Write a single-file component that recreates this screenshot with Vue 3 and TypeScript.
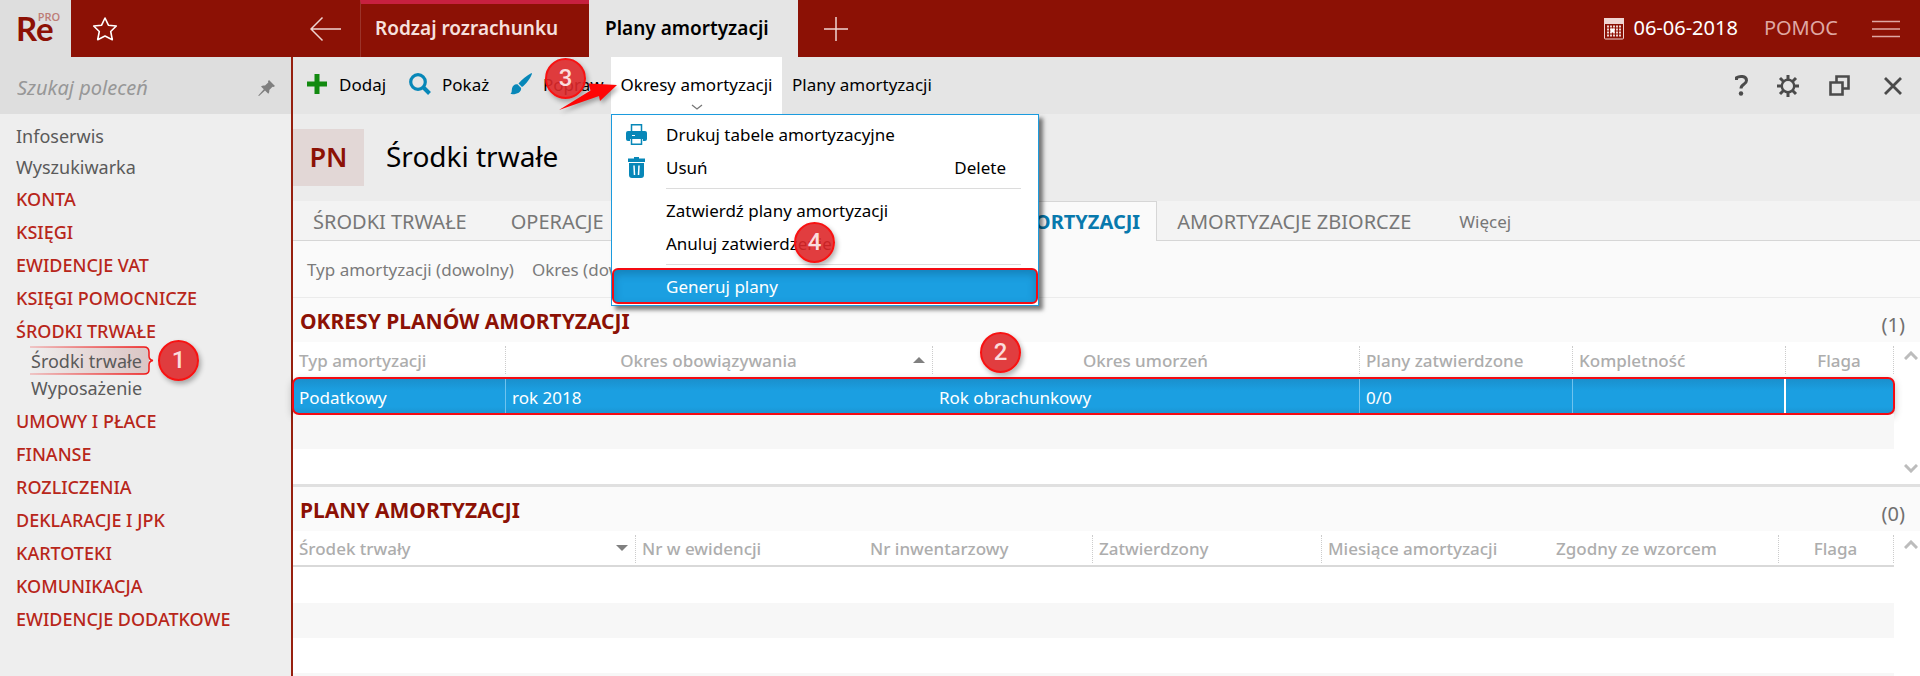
<script setup lang="ts">
interface NavEntry {
  label: string
  kind: 'plain' | 'group' | 'sub'
  step?: number
  last?: boolean
}

interface Column {
  label: string
  share: number
  align?: 'center'
  sort?: 'up' | 'down'
  divider: boolean
}

const navEntries: NavEntry[] = [
  { label: 'Infoserwis', kind: 'plain' },
  { label: 'Wyszukiwarka', kind: 'plain' },
  { label: 'KONTA', kind: 'group' },
  { label: 'KSIĘGI', kind: 'group' },
  { label: 'EWIDENCJE VAT', kind: 'group' },
  { label: 'KSIĘGI POMOCNICZE', kind: 'group' },
  { label: 'ŚRODKI TRWAŁE', kind: 'group' },
  { label: 'Środki trwałe', kind: 'sub', step: 1 },
  { label: 'Wyposażenie', kind: 'sub', last: true },
  { label: 'UMOWY I PŁACE', kind: 'group' },
  { label: 'FINANSE', kind: 'group' },
  { label: 'ROZLICZENIA', kind: 'group' },
  { label: 'DEKLARACJE I JPK', kind: 'group' },
  { label: 'KARTOTEKI', kind: 'group' },
  { label: 'KOMUNIKACJA', kind: 'group' },
  { label: 'EWIDENCJE DODATKOWE', kind: 'group' },
]

const periodColumns: Column[] = [
  { label: 'Typ amortyzacji', share: 213, divider: true },
  { label: 'Okres obowiązywania', share: 427, align: 'center', sort: 'up', divider: true },
  { label: 'Okres umorzeń', share: 427, align: 'center', divider: true },
  { label: 'Plany zatwierdzone', share: 213, divider: true },
  { label: 'Kompletność', share: 213, divider: true },
  { label: 'Flaga', share: 108, align: 'center', divider: true },
]

const planColumns: Column[] = [
  { label: 'Środek trwały', share: 343, sort: 'down', divider: true },
  { label: 'Nr w ewidencji', share: 228, divider: false },
  { label: 'Nr inwentarzowy', share: 229, divider: true },
  { label: 'Zatwierdzony', share: 229, divider: true },
  { label: 'Miesiące amortyzacji', share: 228, divider: false },
  { label: 'Zgodny ze wzorcem', share: 229, divider: true },
  { label: 'Flaga', share: 115, align: 'center', divider: true },
]

const selectedPeriod: string[] = ['Podatkowy', 'rok 2018', 'Rok obrachunkowy', '0/0', '', '']

function columnWidth(columns: Column[], column: Column): string {
  const total = columns.reduce((sum, c) => sum + c.share, 0)
  return `${(column.share / total) * 100}%`
}
</script>

<template>
  <div class="app">
    <header class="topbar">
      <div class="brand" aria-label="Re PRO"><span class="brand-re">Re</span><span class="brand-pro">PRO</span></div>
      <button class="favourite" type="button" aria-label="Ulubione">
        <svg width="28" height="28" viewBox="0 0 28 28"><path d="M14 3l3.4 7.2 7.9.8-5.600 5.500 1.600 8.200L14 21l-7.300 3.700 1.600-8.200L2.700 11l7.900-.8z" fill="none" stroke="#fff" stroke-width="1.600" stroke-linejoin="round" /></svg>
      </button>
      <button class="back" type="button" aria-label="Wstecz">
        <svg width="32" height="26" viewBox="0 0 32 26"><path d="M31 13H1M12.500 1.500L1 13l11.500 11.500" fill="none" stroke="#efd5d2" stroke-width="1.500" /></svg>
      </button>
      <nav class="window-tabs">
        <button class="window-tab" type="button">Rodzaj rozrachunku</button>
        <button class="window-tab current" type="button">Plany amortyzacji</button>
        <button class="new-tab" type="button" aria-label="Nowa karta">
          <svg width="24" height="24" viewBox="0 0 24 24"><path d="M12 0v24M0 12h24" stroke="#efd5d2" stroke-width="1.500" /></svg>
        </button>
      </nav>
      <div class="top-right">
        <button class="date" type="button">
          <svg width="20" height="22" viewBox="0 0 20 22">
            <rect x=".5" y=".5" width="19" height="20.500" rx="1" fill="none" stroke="#efd5d2" />
            <path d="M0 0h20v6H0z" fill="#efd5d2" />
            <path d="M3 8.500h14M3 11.500h14M3 14.500h14M3 17.500h14" stroke="#efd5d2" stroke-width="2" stroke-dasharray="2 1" />
            <path d="M6.500 10.500h4v4h-4z" fill="#fff" />
          </svg>
          <span>06-06-2018</span>
        </button>
        <a class="help-link" href="#pomoc">POMOC</a>
        <button class="burger" type="button" aria-label="Menu">
          <svg width="28" height="20" viewBox="0 0 28 20"><path d="M0 2.500h28M0 10h28M0 17.500h28" stroke="#dfa8a3" stroke-width="1.500" /></svg>
        </button>
      </div>
    </header>

    <div class="body">
      <aside class="sidebar">
        <div class="search">
          <input type="text" placeholder="Szukaj poleceń" aria-label="Szukaj poleceń" />
          <svg width="18" height="18" viewBox="0 0 18 18"><path d="M11 1l6 6-1.500 1-1-.3-3.200 3.300c.2 1.600-.1 2.700-1 3.700L7 11.500 1 17H.5v-.8l5.300-6L3 7.500c1.200-1 2.500-1.200 4-.9l3.300-3.200L10 2.200z" fill="#7f7f7f" /></svg>
        </div>
        <nav class="nav">
          <a v-for="entry in navEntries" :key="entry.label + entry.kind" href="#" class="nav-item" :class="[entry.kind, { last: entry.last }]">
            <svg v-if="entry.step" class="brace" width="125" height="32" viewBox="0 0 125 32">
              <defs>
                <linearGradient id="braceFill" x1="0" x2="1" y1="0" y2="0"><stop offset="0" stop-color="#cc7a74" stop-opacity="0" /><stop offset="1" stop-color="#bd8a88" stop-opacity=".4" /></linearGradient>
                <linearGradient id="braceLine" gradientUnits="userSpaceOnUse" x1="0" x2="110" y1="0" y2="0"><stop offset="0" stop-color="#f01818" stop-opacity=".25" /><stop offset="1" stop-color="#f01818" /></linearGradient>
              </defs>
              <path d="M0 2h114q5 0 5 5v18q0 4-5 4H0z" fill="url(#braceFill)" />
              <path d="M0 2h114q5 0 5 5v4q0 4 4 4.500-4 .5-4 4.500v5q0 4-5 4H0" fill="none" stroke="url(#braceLine)" stroke-width="1.500" />
            </svg>
            <span class="nav-label">{{ entry.label }}</span>
            <span v-if="entry.step" class="step step-nav">{{ entry.step }}</span>
          </a>
        </nav>
      </aside>

      <main class="content">
        <div class="toolbar">
          <button class="tool add" type="button">
            <svg width="20" height="20" viewBox="0 0 20 20"><path d="M10 0v20M0 10h20" stroke="#128a10" stroke-width="5" /></svg>Dodaj
          </button>
          <button class="tool show" type="button">
            <svg width="22" height="22" viewBox="0 0 22 22"><circle cx="9" cy="9" r="7.300" fill="none" stroke="#0787b8" stroke-width="3.200" /><path d="M14 14l6.500 6.500" stroke="#0787b8" stroke-width="4" /></svg>Pokaż
          </button>
          <button class="tool edit" type="button">
            <svg width="22" height="22" viewBox="0 0 22 22"><path d="M21.500 0L22 .8C20 6 16 11.500 12 14L8.500 10.500C12 6.500 16.500 2.500 21.500 0zM7.500 11.300l3.600 3.600c.4 4.600-5.100 6.900-10.600 6.100 1.500-1.500 1-3 1.500-5.500.5-3 3-4.800 5.500-4.200z" fill="#0787b8" /></svg>Popraw
          </button>
          <div class="menu-anchor">
            <button class="tool dropdown-toggle" type="button" aria-expanded="true">Okresy amortyzacji
              <svg class="chevron" width="12" height="6" viewBox="0 0 12 6"><path d="M1 1l5 4 5-4" fill="none" stroke="#777" stroke-width="1.300" /></svg>
            </button>
            <svg class="pointer" width="64" height="36" viewBox="0 0 64 36"><path d="M2 31L33.500 11.500l-2-7L60 6 43 22l-1-5z" fill="#fe0505" /></svg>
            <span class="step step-edit">3</span>
            <div class="menu" role="menu">
              <button class="menu-item" type="button" role="menuitem">
                <span class="menu-icon"><svg width="21" height="21" viewBox="0 0 21 21"><path d="M5.500 8V.8h10V8M5.500 15v5.200h10V15" fill="#fff" stroke="#0787b8" stroke-width="1.500" /><path d="M2 7h17q2 0 2 2v6q0 2-2 2h-2v-2H4v2H2q-2 0-2-2V9q0-2 2-2z" fill="#0787b8" /><path d="M6 11.500h3" stroke="#fff" /></svg></span>
                Drukuj tabele amortyzacyjne
              </button>
              <button class="menu-item" type="button" role="menuitem">
                <span class="menu-icon"><svg width="17" height="21" viewBox="0 0 17 21"><path d="M6 0h5v1.500h6V5H0V1.500h6zM1 6h15v12q0 3-3 3H4q-3 0-3-3z" fill="#0787b8" /><path d="M6 8.500l.5 9.500M11 8.500l-.5 9.500" stroke="#fff" stroke-width="1.500" /></svg></span>
                Usuń<kbd>Delete</kbd>
              </button>
              <hr />
              <button class="menu-item" type="button" role="menuitem"><span class="menu-icon"></span>Zatwierdź plany amortyzacji</button>
              <button class="menu-item" type="button" role="menuitem"><span class="menu-icon"></span>Anuluj zatwierdzenie<span class="step step-menu">4</span></button>
              <hr />
              <button class="menu-item chosen" type="button" role="menuitem"><span class="menu-icon"></span>Generuj plany</button>
            </div>
          </div>
          <button class="tool plans" type="button">Plany amortyzacji</button>
          <div class="window-tools">
            <button type="button" aria-label="Pomoc"><svg width="14" height="21" viewBox="0 0 14 21"><path d="M1.500 5V2.800C4 1 11.500.5 11.500 5.500c0 4-5.500 3.500-5.500 8" fill="none" stroke="#4b4b4b" stroke-width="3" /><circle cx="6" cy="18.500" r="2.200" fill="#4b4b4b" /></svg></button>
            <button type="button" aria-label="Ustawienia"><svg width="22" height="22" viewBox="0 0 22 22"><circle cx="11" cy="11" r="6.200" fill="none" stroke="#4b4b4b" stroke-width="2.400" /><path d="M11 0v5M11 17v5M0 11h5M17 11h5M3 3l4 4M15 15l4 4M19 3l-4 4M7 15l-4 4" stroke="#4b4b4b" stroke-width="3" /></svg></button>
            <button type="button" aria-label="Przywróć"><svg width="21" height="21" viewBox="0 0 21 21"><path d="M7.500 7V1.500h12v12H14M1.500 7.500h12v12h-12z" fill="none" stroke="#4b4b4b" stroke-width="2.600" /></svg></button>
            <button type="button" aria-label="Zamknij"><svg width="18" height="18" viewBox="0 0 18 18"><path d="M1 1l16 16M17 1L1 17" stroke="#4b4b4b" stroke-width="2.800" /></svg></button>
          </div>
        </div>

        <div class="heading">
          <span class="badge">PN</span>
          <h1>Środki trwałe</h1>
        </div>

        <nav class="views">
          <a href="#" class="view">ŚRODKI TRWAŁE</a>
          <a href="#" class="view operations">OPERACJE</a>
          <a href="#" class="view active">PLANY AMORTYZACJI</a>
          <a href="#" class="view">AMORTYZACJE ZBIORCZE</a>
          <a href="#" class="more">Więcej</a>
        </nav>

        <div class="filters">
          <button type="button">Typ amortyzacji (dowolny)</button>
          <button type="button">Okres (dowolny)</button>
        </div>

        <section class="panel first">
          <div class="panel-head">
            <h2>OKRESY PLANÓW AMORTYZACJI</h2>
            <span class="count">(1)</span>
          </div>
          <div class="grid-wrap">
            <div class="grid-area">
              <table>
                <thead>
                  <tr>
                    <th v-for="c in periodColumns" :key="c.label" :class="[c.align, { divider: c.divider }]" :style="{ width: columnWidth(periodColumns, c) }">
                      <div class="th-inner"><span class="th-text">{{ c.label }}</span><span v-if="c.sort" class="sort" :class="c.sort"></span></div>
                    </th>
                  </tr>
                </thead>
                <tbody>
                  <tr class="selected"><td v-for="(cell, i) in selectedPeriod" :key="i">{{ cell }}</td></tr>
                  <tr class="stripe"><td colspan="6"></td></tr>
                  <tr><td colspan="6"></td></tr>
                </tbody>
              </table>
              <span class="step step-row">2</span>
            </div>
            <div class="scroller">
              <svg width="14" height="9" viewBox="0 0 14 9"><path d="M1 8l6-6 6 6" fill="none" stroke="#bcbcbc" stroke-width="3" /></svg>
              <svg width="14" height="9" viewBox="0 0 14 9"><path d="M1 1l6 6 6-6" fill="none" stroke="#bcbcbc" stroke-width="3" /></svg>
            </div>
          </div>
        </section>

        <section class="panel">
          <div class="panel-head">
            <h2>PLANY AMORTYZACJI</h2>
            <span class="count">(0)</span>
          </div>
          <div class="grid-wrap">
            <div class="grid-area">
              <table class="lined">
                <thead>
                  <tr>
                    <th v-for="c in planColumns" :key="c.label" :class="[c.align, { divider: c.divider }]" :style="{ width: columnWidth(planColumns, c) }">
                      <div class="th-inner"><span class="th-text">{{ c.label }}</span><span v-if="c.sort" class="sort" :class="c.sort"></span></div>
                    </th>
                  </tr>
                </thead>
                <tbody>
                  <tr><td colspan="7"></td></tr>
                  <tr class="stripe"><td colspan="7"></td></tr>
                  <tr><td colspan="7"></td></tr>
                  <tr class="stripe"><td colspan="7"></td></tr>
                </tbody>
              </table>
            </div>
            <div class="scroller">
              <svg width="14" height="9" viewBox="0 0 14 9"><path d="M1 8l6-6 6 6" fill="none" stroke="#bcbcbc" stroke-width="3" /></svg>
            </div>
          </div>
        </section>
      </main>
    </div>
  </div>
</template>

<style>
body {
  margin: 0;
}
</style>

<style scoped>
.app {
  display: flex;
  flex-direction: column;
  height: 100vh;
  overflow: hidden;
  background: #fff;
  color: #000;
  font-family: "Noto Sans", "Open Sans", sans-serif;
  font-size: 17px;
}
.app *, .app *::before { box-sizing: border-box; }
button {
  margin: 0;
  padding: 0;
  border: 0;
  background: none;
  color: inherit;
  font: inherit;
  white-space: nowrap;
}
a { color: inherit; text-decoration: none; white-space: nowrap; }
svg { display: block; flex: none; }
h1, h2 { margin: 0; }

.topbar {
  display: flex;
  flex: none;
  height: 57px;
  background: #8c1105;
  color: #f6e0de;
}
.brand {
  display: flex;
  width: 71px;
  padding-left: 16px;
  background: #dedede;
  color: #8c1105;
}
.brand-re { font: 700 33px/56px Lato, "Noto Sans", sans-serif; }
.brand-pro { margin-left: -16px; font: 600 11px/34px "Open Sans", sans-serif; color: #bd7c76; }
.favourite { width: 34px; margin-left: 20px; display: flex; align-items: center; }
.back { display: flex; align-items: center; margin-left: 185px; width: 50px; }
.window-tabs { display: flex; }
.window-tab {
  width: 229px;
  padding: 0 0 6px 14px;
  border-top: 4px solid #c7203f;
  border-left: 1px solid #9c332a;
  text-align: left;
  font-size: 19px;
  font-weight: 600;
}
.window-tab.current {
  width: 209px;
  border-top: 0;
  border-left: 0;
  padding: 0 0 2px 16px;
  background: #e5e5e5;
  color: #000;
}
.new-tab { display: flex; align-items: center; padding-left: 26px; }
.top-right { display: flex; align-items: center; margin-left: auto; padding-right: 20px; }
.date { display: flex; align-items: center; gap: 9px; font-size: 20px; color: #fff; }
.date span, .help-link { padding-bottom: 2px; }
.help-link { margin-left: 26px; font-size: 20px; color: #dfa8a3; }
.burger { margin-left: 34px; }

.body { display: flex; flex: 1; min-height: 0; }
.sidebar { flex: none; width: 293px; border-right: 2px solid #96200f; background: #eee; }
.search { display: flex; align-items: center; height: 57px; padding: 4px 15px 0 17px; background: #dedede; }
.search input {
  flex: 1;
  min-width: 0;
  padding: 0;
  border: 0;
  outline: 0;
  background: none;
  font: italic 20px "Noto Sans", sans-serif;
}
.search input::placeholder { color: #979797; opacity: 1; }
.nav { display: flex; flex-direction: column; padding-top: 6px; }
.nav-item { position: relative; display: flex; align-items: center; height: 33px; padding-left: 16px; color: #b8261a; font-size: 18px; }
.nav-item.plain { height: 31px; color: #5a5a5a; }
.nav-item.sub { height: 27px; padding-left: 31px; color: #5a5a5a; }
.nav-item.last { margin-bottom: 3px; }
.nav-item.group { font-weight: 500; }
.nav-label { position: relative; }
.brace { position: absolute; left: 30px; top: -2px; }

.step {
  position: absolute;
  z-index: 5;
  width: 41px;
  height: 41px;
  border: 2px solid #f81212;
  border-radius: 50%;
  background: rgba(222, 40, 42, .9);
  box-shadow: 2px 3px 5px rgba(0, 0, 0, .3);
  color: #fbdcdc;
  font: 500 24px/36px Roboto, sans-serif;
  text-align: center;
}
.step-nav { left: 158px; top: -7px; }
.step-edit { left: -66px; top: 1px; }
.step-menu { left: 182px; top: -6px; }
.step-row { left: 687px; top: -10px; }

.content { display: flex; flex: 1; flex-direction: column; min-width: 0; }
.toolbar { display: flex; flex: none; height: 57px; background: #e5e5e5; }
.tool { display: flex; align-items: center; padding-bottom: 3px; }
.tool.add { gap: 12px; margin-left: 14px; width: 102px; }
.tool.show { gap: 11px; width: 101px; }
.tool.edit { gap: 11px; width: 101px; }
.menu-anchor { position: relative; }
.dropdown-toggle { position: relative; width: 171px; height: 57px; justify-content: center; background: #fff; }
.chevron { position: absolute; left: 80px; bottom: 4px; }
.tool.plans { margin-left: 10px; }
.pointer { position: absolute; z-index: 6; left: -54px; top: 22px; filter: drop-shadow(2px 3px 2px rgba(0, 0, 0, .3)); }
.window-tools { display: flex; align-items: center; margin-left: auto; padding-right: 18px; }
.window-tools button:nth-child(2) { margin-left: 28px; }
.window-tools button:nth-child(3) { margin-left: 30px; }
.window-tools button:nth-child(4) { margin-left: 34px; }

.menu {
  position: absolute;
  z-index: 4;
  left: 0;
  top: 57px;
  width: 428px;
  padding: 4px 0 1px;
  border: 1px solid #1b9bde;
  background: #fff;
  box-shadow: 4px 4px 4px rgba(0, 0, 0, .5);
}
.menu-item { position: relative; display: flex; align-items: center; width: 100%; height: 33px; padding-bottom: 2px; text-align: left; }
.menu-icon { display: flex; justify-content: center; flex: none; width: 49px; margin-right: 5px; }
.menu kbd { margin-left: auto; padding-right: 32px; font: inherit; }
.menu hr { height: 1px; margin: 3px 17px 6px 54px; border: 0; background: #dcdcdc; }
.menu-item.chosen {
  height: 36px;
  margin-top: -3px;
  padding: 1px 0 0;
  border: 2px solid #f40b12;
  border-radius: 6px;
  background: #1b9fe1;
  box-shadow: inset 0 4px 8px rgba(0, 50, 80, .28);
  color: #fff;
}
.menu-item.chosen .menu-icon { width: 47px; }

.heading { display: flex; flex: none; align-items: center; height: 87px; background: #ececec; }
.badge {
  width: 71px;
  height: 57px;
  background: #e2d7d6;
  color: #8c1105;
  font-size: 27px;
  font-weight: 600;
  line-height: 55px;
  text-align: center;
}
h1 { margin-left: 22px; padding-bottom: 3px; font-size: 28px; font-weight: 400; }

.views { display: flex; flex: none; height: 40px; background: #f3f3f3; color: #777; font-size: 20px; line-height: 42px; box-shadow: inset 0 -1px #d6d6d6; }
.view { padding: 0 24px 0 20px; }
.view.operations { width: 423px; }
.view.active { padding: 0 16px; border: 1px solid #d6d6d6; border-bottom: 0; background: #fafafa; color: #0879ad; font-weight: 700; line-height: 40px; }
.more { padding-left: 24px; font-size: 17px; }

.filters { display: flex; flex: none; gap: 18px; height: 57px; padding-left: 14px; border-bottom: 1px solid #ebebeb; background: #fafafa; color: #7b7b7b; }

.panel-head { display: flex; justify-content: space-between; height: 44px; padding: 0 15px 0 7px; background: #fafafa; }
.panel.first { border-bottom: 3px solid #e0e0e0; }
h2 { font-size: 21px; font-weight: 700; line-height: 46px; color: #8c1105; }
.count { padding-top: 4px; font-size: 20px; line-height: 46px; color: #707070; }
.grid-wrap { display: flex; }
.grid-area { position: relative; flex: 1; min-width: 0; }
table { width: 100%; border-collapse: separate; border-spacing: 0; table-layout: fixed; }
th { position: relative; height: 36px; padding: 0; color: #adadad; font-weight: 500; text-align: left; white-space: nowrap; }
th.divider::before { content: ""; position: absolute; right: 0; top: 4px; height: 28px; border-right: 1px dotted #ccc; }
.th-inner { display: flex; align-items: center; padding: 0 8px 0 6px; }
.th-text { flex: 1; }
th.center .th-text { text-align: center; }
.sort { margin-left: 8px; border: 6px solid transparent; }
.sort.up { border-top: 0; border-bottom-color: #808080; }
.sort.down { border-bottom: 0; border-top-color: #808080; }
.lined th { border-bottom: 2px solid #d9d9d9; }
td { height: 35px; padding: 0 6px; }
tr:first-child td { height: 36px; }
tr.stripe td { background: #f7f7f7; }
tr.selected { outline: 2px solid #f40b12; outline-offset: -1px; border-radius: 6px; box-shadow: 0 3px 8px rgba(0, 0, 0, .3); }
tr.selected td { padding-top: 3px; border-right: 1px solid #6fc3ee; background: linear-gradient(#1a8ecb, #1b9fe1 35%, #1b9fe1 80%, #1a93d1); color: #fff; }
tr.selected td:nth-child(2) { border-right-color: transparent; }
tr.selected td:nth-child(5) { border-right: 2px solid #fff; }
tr.selected td:last-child { border-right: 0; border-radius: 0 6px 6px 0; }
tr.selected td:first-child { border-radius: 6px 0 0 6px; }
.scroller { display: flex; flex: none; flex-direction: column; justify-content: space-between; align-items: center; width: 26px; padding: 9px 0 11px 8px; }
</style>
